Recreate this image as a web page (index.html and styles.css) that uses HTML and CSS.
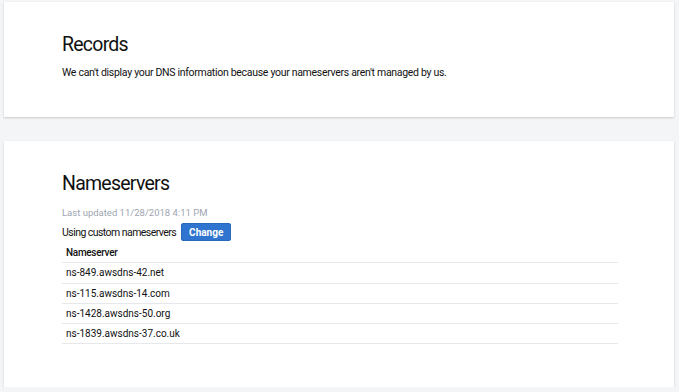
FILE: index.html
```html
<!DOCTYPE html>
<html lang="en">
<head>
    <meta charset="UTF-8">
    <meta name="viewport" content="width=device-width, initial-scale=1.0">
    <title>DNS Management</title>
    <link rel="stylesheet" href="styles.css">
</head>
<body>
    <div class="page">
        <section class="card records">
            <h2>Records</h2>
            <p class="note">We can't display your DNS information because your nameservers aren't managed by us.</p>
        </section>

        <section class="card nameservers">
            <h2>Nameservers</h2>
            <p class="updated">Last updated 11/28/2018 4:11 PM</p>
            <div class="using">
                <span>Using custom nameservers</span>
                <button class="btn-change">Change</button>
            </div>
            <table class="ns-table">
                <thead>
                    <tr><th>Nameserver</th></tr>
                </thead>
                <tbody>
                    <tr><td>ns-849.awsdns-42.net</td></tr>
                    <tr><td>ns-115.awsdns-14.com</td></tr>
                    <tr><td>ns-1428.awsdns-50.org</td></tr>
                    <tr><td>ns-1839.awsdns-37.co.uk</td></tr>
                </tbody>
            </table>
        </section>
    </div>
</body>
</html>
```

FILE: styles.css
```css
body {
    font-family: 'Roboto', 'Liberation Sans', Arial, sans-serif;
    margin: 0;
    padding: 0;
    background-color: #f4f5f7;
    color: #111111;
}

.page {
    display: flex;
    flex-direction: column;
    gap: 24px;
    padding: 2px 5px 0 4px;
}

.card {
    background-color: #ffffff;
    box-shadow: 0 1px 2px rgba(0, 0, 0, 0.18);
    padding: 31px 58px 0 58px;
}

.card h2 {
    margin: 0;
    font-size: 19.5px;
    font-weight: normal;
    line-height: 24px;
    letter-spacing: -0.75px;
}

.records {
    height: 84px;
}

.note {
    margin: 8px 0 0 0;
    font-size: 10.5px;
    line-height: 16px;
    letter-spacing: -0.3px;
}

.nameservers {
    height: 215px;
}

.updated {
    margin: 10px 0 0 0;
    font-size: 9.5px;
    line-height: 14px;
    color: #9ea6b2;
}

.using {
    display: flex;
    align-items: center;
    gap: 5px;
    margin-top: 3px;
    font-size: 10.5px;
    letter-spacing: -0.55px;
    height: 18px;
}

.btn-change {
    background-color: #2f74cf;
    color: #ffffff;
    border: 1px solid #2a68ba;
    border-radius: 2px;
    font-family: inherit;
    font-size: 10px;
    font-weight: bold;
    letter-spacing: 0;
    height: 18px;
    width: 50px;
    padding: 0;
    cursor: pointer;
}

.ns-table {
    width: 556px;
    border-collapse: collapse;
    margin-top: 2px;
}

.ns-table th,
.ns-table td {
    text-align: left;
    font-size: 10px;
    padding: 0 4px;
    height: 19.3px;
    border-bottom: 1px solid #e6e8eb;
}

.ns-table th {
    font-weight: 500;
    letter-spacing: -0.3px;
}
```
